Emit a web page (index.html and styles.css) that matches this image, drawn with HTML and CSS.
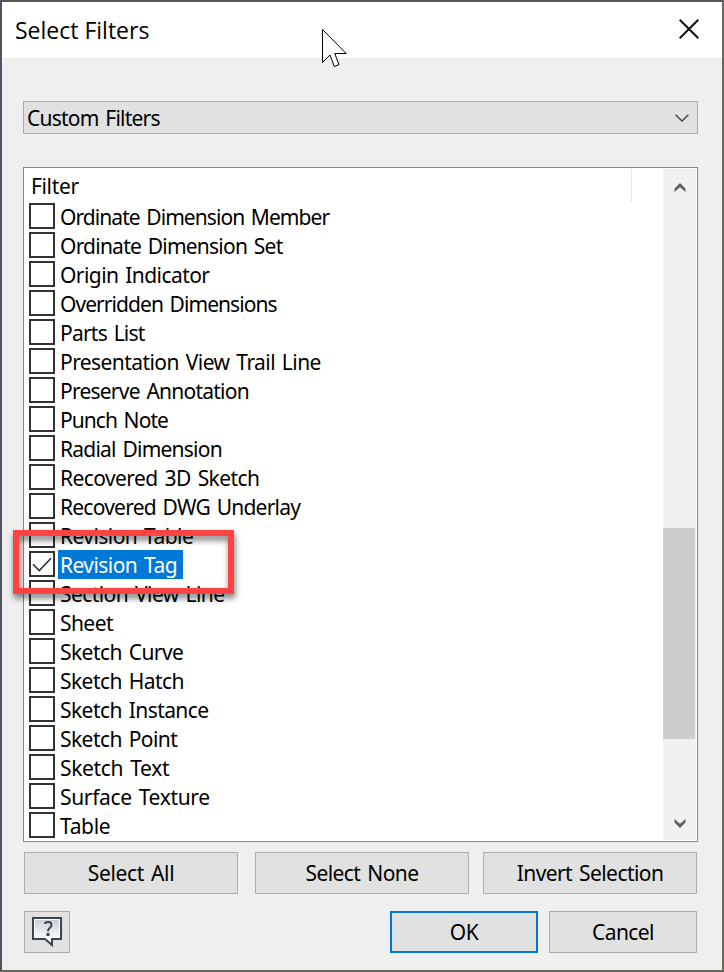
FILE: index.html
```html
<!DOCTYPE html>
<html lang="en">
<head>
  <meta charset="UTF-8">
  <title>Select Filters</title>
  <link rel="stylesheet" href="styles.css">
</head>
<body>

<div class="dialog">
  <div class="titlebar">
    <span class="title">Select Filters</span>
    <svg class="close" width="20" height="20" viewBox="0 0 20 20"><path d="M.7.7l18.6 18.6M19.3.7L.7 19.3"/></svg>
  </div>

  <div class="content">
    <div class="combo">
      <span class="snug">Custom Filters</span>
      <svg class="arrow" width="14" height="8" viewBox="0 0 14 8"><path d="M.6.7L7 7 13.4.7"/></svg>
    </div>

    <div class="list">
      <div class="items">
        <div class="header loose">Filter</div>
        <label class="row tight"><i class="box"></i><span class="name">Ordinate Dimension Member</span></label>
        <label class="row snug"><i class="box"></i><span class="name">Ordinate Dimension Set</span></label>
        <label class="row"><i class="box"></i><span class="name">Origin Indicator</span></label>
        <label class="row tight"><i class="box"></i><span class="name">Overridden Dimensions</span></label>
        <label class="row snug"><i class="box"></i><span class="name">Parts List</span></label>
        <label class="row"><i class="box"></i><span class="name">Presentation View Trail Line</span></label>
        <label class="row snug"><i class="box"></i><span class="name">Preserve Annotation</span></label>
        <label class="row tight"><i class="box"></i><span class="name">Punch Note</span></label>
        <label class="row snug"><i class="box"></i><span class="name">Radial Dimension</span></label>
        <label class="row"><i class="box"></i><span class="name">Recovered 3D Sketch</span></label>
        <label class="row snug"><i class="box"></i><span class="name">Recovered DWG Underlay</span></label>
        <label class="row"><i class="box"></i><span class="name">Revision Table</span></label>
        <label class="row selected"><i class="box"><svg width="22" height="22" viewBox="0 0 22 22"><path d="M2 11.3L8.3 17.5 20 5.3"/></svg></i><span class="name">Revision Tag</span></label>
        <label class="row"><i class="box"></i><span class="name">Section View Line</span></label>
        <label class="row"><i class="box"></i><span class="name">Sheet</span></label>
        <label class="row"><i class="box"></i><span class="name">Sketch Curve</span></label>
        <label class="row"><i class="box"></i><span class="name">Sketch Hatch</span></label>
        <label class="row"><i class="box"></i><span class="name">Sketch Instance</span></label>
        <label class="row"><i class="box"></i><span class="name">Sketch Point</span></label>
        <label class="row loose"><i class="box"></i><span class="name">Sketch Text</span></label>
        <label class="row loose"><i class="box"></i><span class="name">Surface Texture</span></label>
        <label class="row loose"><i class="box"></i><span class="name">Table</span></label>
      </div>
      <div class="scrollbar">
        <svg class="up" width="12" height="9" viewBox="0 0 12 9"><path d="M.5 5.500L6 0l5.500 5.500V9L6 4.200.5 9z"/></svg>
        <div class="thumb"></div>
        <svg class="down" width="12" height="9" viewBox="0 0 12 9"><path d="M.5 3.500L6 9l5.500-5.500V0L6 4.800.5 0z"/></svg>
      </div>
    </div>

    <div class="buttons">
      <button class="loose">Select All</button>
      <button>Select None</button>
      <button>Invert Selection</button>
    </div>

    <div class="footer">
      <button class="help">
        <svg width="32" height="32" viewBox="0 0 32 32">
          <defs>
            <linearGradient id="bubble" x1="0" y1="0" x2="0" y2="1">
              <stop offset="0" stop-color="#c5c9d2"/>
              <stop offset=".8" stop-color="#fff"/>
            </linearGradient>
          </defs>
          <path class="bubble" d="M2 2h28v21h-9v6l-7-6H2z"/>
          <path class="rim" d="M3.500 21.500V3.500h25v18"/>
          <path class="mark" d="M14 8q0-2 3.200-2 3.300 0 3.300 3 0 2-2 3.200-1.500 1-1.500 3.300"/>
          <path class="dot" d="M15.500 17h3v3h-3z"/>
        </svg>
      </button>
      <button class="ok">OK</button>
      <button class="cancel">Cancel</button>
    </div>
  </div>
</div>

<!-- callout around the checked row -->
<div class="highlight"></div>

<svg class="cursor" width="27" height="40" viewBox="0 0 27 40"><path d="M1.500 1.500v33l7.500-7.500 4.300 11.500 4.700-2L13.700 25.500h11.500z"/></svg>

</body>
</html>
```

FILE: styles.css
```css
* {
  box-sizing: border-box;
}

body {
  margin: 0;
  font-family: "Noto Sans", sans-serif;
  font-size: 21px;
  letter-spacing: -0.57px;
  word-spacing: 2px;
  color: #000;
}

svg {
  display: block;
  fill: none;
}

.loose {
  letter-spacing: -0.35px;
}

.snug {
  letter-spacing: -0.77px;
}

.tight {
  letter-spacing: -0.93px;
}

.dialog {
  width: 724px;
  height: 972px;
  border: 2px solid #53565a;
  border-color: #53565a #67675f #67675f #50545f;
  background: #efefef;
}

.titlebar {
  display: flex;
  justify-content: space-between;
  height: 56px;
  padding: 0 23px 0 13px;
  background: #fff;
}

.title {
  font-family: "Open Sans", sans-serif;
  font-size: 23px;
  line-height: 56px;
  letter-spacing: 0;
  word-spacing: 0;
}

.close {
  margin-top: 17px;
  stroke: #111;
  stroke-width: 2;
}

.content {
  padding: 43px 24px 0 21px;
}

.combo {
  display: flex;
  align-items: center;
  justify-content: space-between;
  height: 33px;
  padding: 0 8px 0 3px;
  border: 1px solid #acacac;
  background: #e1e1e1;
}

.arrow {
  stroke: #444;
  stroke-width: 1.4;
}

.list {
  display: flex;
  height: 675px;
  margin-top: 33px;
  padding: 1px;
  border: 1px solid #828790;
  background: #fff;
}

.items {
  flex: 1;
}

.header {
  width: 607px;
  height: 33px;
  padding-left: 6px;
  border-right: 1px solid #e5e5e5;
  line-height: 35px;
}

.row {
  display: flex;
  height: 29px;
  padding-left: 4px;
}

.box {
  width: 26px;
  height: 26px;
  margin: 1px 3px 0 0;
  border: 2px solid #333;
  background: #fff;
}

.box svg {
  stroke: #333;
  stroke-width: 1.6;
}

.name {
  height: 29px;
  padding: 0 6px 0 2px;
  line-height: 30px;
  white-space: nowrap;
}

.selected .name {
  background: #0078d7;
  color: #fff;
}

.scrollbar {
  display: flex;
  flex-direction: column;
  width: 33px;
  padding: 14px 0 12px;
  background: #f0f0f0;
}

.scrollbar svg {
  margin-left: 11px;
  fill: #606060;
}

.thumb {
  width: 32px;
  height: 211px;
  margin-top: 336px;
  background: #cdcdcd;
}

.scrollbar .down {
  margin-top: auto;
}

button {
  width: 214px;
  height: 42px;
  padding: 0;
  border: 1px solid #adadad;
  background: #e1e1e1;
  font-family: inherit;
  font-size: inherit;
  letter-spacing: -0.57px;
  word-spacing: 2px;
  color: inherit;
}

button.loose {
  letter-spacing: -0.35px;
}

.buttons {
  display: flex;
  margin: 10px 0 0 1px;
}

.buttons button:nth-child(2) {
  margin: 0 14px 0 17px;
}

.footer {
  display: flex;
  margin: 17px 0 0 1px;
}

.help {
  width: 46px;
  padding-left: 6px;
}

.ok {
  width: 148px;
  margin: 0 11px 0 auto;
  border: 2px solid #0078d7;
}

.cancel {
  width: 148px;
  margin-right: 1px;
}

.bubble {
  fill: url(#bubble);
  stroke: #3b4453;
  stroke-width: 2;
}

.rim {
  stroke: #fff;
}

.mark {
  stroke: #3b4453;
  stroke-width: 2;
}

.dot {
  fill: #3b4453;
}

.highlight {
  position: absolute;
  left: 13px;
  top: 530px;
  width: 221px;
  height: 64px;
  border: 6px solid #ff4343;
  filter: drop-shadow(1px 4px 3px rgba(0, 0, 0, 0.55));
}

.cursor {
  position: absolute;
  left: 321px;
  top: 28px;
  fill: #fff;
  stroke: #000;
}
```
